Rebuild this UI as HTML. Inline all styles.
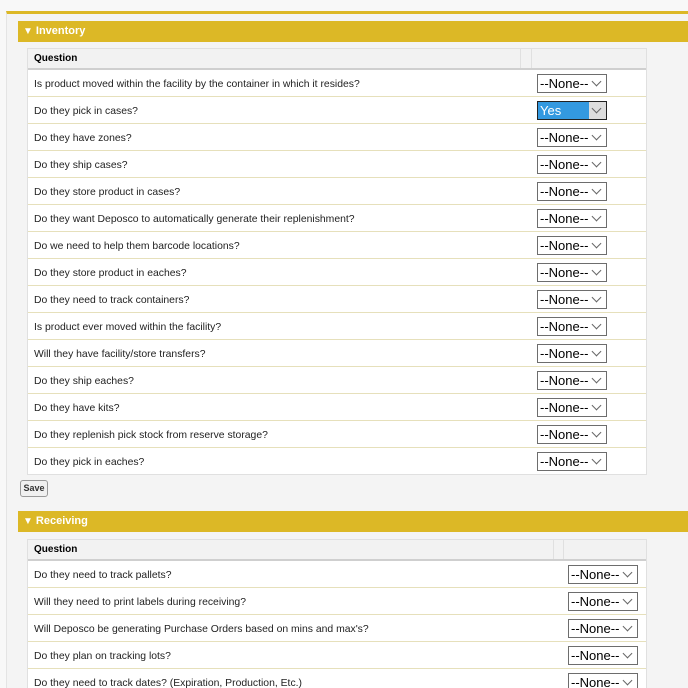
<!DOCTYPE html>
<html style="overflow:hidden"><head><style>
html,body{margin:0;width:688px;height:688px;overflow:hidden}
body{background:#f8f8f8;font-family:"Liberation Sans",Arial,sans-serif;position:relative}
.panel{position:absolute;left:6px;top:11px;width:682px;height:677px;background:#f4f4f4;border-top:3px solid #dcb826;border-left:1px solid #e4e4e4}
.bar{position:absolute;left:18px;width:670px;height:21px;background:#dcb826;color:#fff;font-weight:bold;font-size:11px;line-height:21px}
.bar span{margin-left:5px;font-size:10px;margin-right:3px}
.tbl{position:absolute;left:27px;width:618px;background:#fff;border:1px solid #e0e0e0;border-top:0}
.hd{height:19px;background:#f2f2f2;border-top:1px solid #e0e0e0;border-bottom:2px solid #cfcfcf;font-size:10px;font-weight:bold;line-height:19px;padding-left:6px;position:relative}
.hd i{position:absolute;top:0;height:19px;border-left:1px solid #e0e0e0}
.row{height:26px;border-bottom:1px solid #e6e0bb;font-size:10.4px;line-height:29px;padding-left:6px;position:relative;color:#222}
.row:last-child{border-bottom:0}
.sel{position:absolute;top:4px;border:1px solid #6d6d6d;background:#fff;font-size:13px;line-height:17px;color:#000;padding-left:2px;box-sizing:border-box;width:70px;height:19px}
.sel:after{content:"";position:absolute;right:6px;top:3px;width:6px;height:6px;border-right:1px solid #666;border-bottom:1px solid #666;transform:rotate(45deg)}
.yes{border-color:#222;background:#3399e0;color:#fff}
.yes:before{content:"";position:absolute;right:0;top:0;width:17px;height:17px;background:#ddd}
.btn{position:absolute;left:20px;top:480px;width:26px;height:15px;border:1px solid #999;border-radius:3px;background:#f0f0f0;font-size:9px;font-weight:bold;line-height:15px;text-align:center;color:#333}
</style></head><body>
<div class="panel"></div>
<div class="bar" style="top:21px"><span>▼</span>Inventory</div>
<div class="tbl" style="top:48px">
<div class="hd">Question<i style="left:492px"></i><i style="left:503px"></i></div>
<div class="row">Is product moved within the facility by the container in which it resides?<div class="sel" style="left:509px">--None--</div></div>
<div class="row">Do they pick in cases?<div class="sel yes" style="left:509px">Yes</div></div>
<div class="row">Do they have zones?<div class="sel" style="left:509px">--None--</div></div>
<div class="row">Do they ship cases?<div class="sel" style="left:509px">--None--</div></div>
<div class="row">Do they store product in cases?<div class="sel" style="left:509px">--None--</div></div>
<div class="row">Do they want Deposco to automatically generate their replenishment?<div class="sel" style="left:509px">--None--</div></div>
<div class="row">Do we need to help them barcode locations?<div class="sel" style="left:509px">--None--</div></div>
<div class="row">Do they store product in eaches?<div class="sel" style="left:509px">--None--</div></div>
<div class="row">Do they need to track containers?<div class="sel" style="left:509px">--None--</div></div>
<div class="row">Is product ever moved within the facility?<div class="sel" style="left:509px">--None--</div></div>
<div class="row">Will they have facility/store transfers?<div class="sel" style="left:509px">--None--</div></div>
<div class="row">Do they ship eaches?<div class="sel" style="left:509px">--None--</div></div>
<div class="row">Do they have kits?<div class="sel" style="left:509px">--None--</div></div>
<div class="row">Do they replenish pick stock from reserve storage?<div class="sel" style="left:509px">--None--</div></div>
<div class="row">Do they pick in eaches?<div class="sel" style="left:509px">--None--</div></div>
</div>
<div class="btn">Save</div>
<div class="bar" style="top:511px"><span>▼</span>Receiving</div>
<div class="tbl" style="top:539px">
<div class="hd">Question<i style="left:525px"></i><i style="left:535px"></i></div>
<div class="row">Do they need to track pallets?<div class="sel" style="left:540px">--None--</div></div>
<div class="row">Will they need to print labels during receiving?<div class="sel" style="left:540px">--None--</div></div>
<div class="row">Will Deposco be generating Purchase Orders based on mins and max's?<div class="sel" style="left:540px">--None--</div></div>
<div class="row">Do they plan on tracking lots?<div class="sel" style="left:540px">--None--</div></div>
<div class="row">Do they need to track dates? (Expiration, Production, Etc.)<div class="sel" style="left:540px">--None--</div></div>
</div>
</body></html>
